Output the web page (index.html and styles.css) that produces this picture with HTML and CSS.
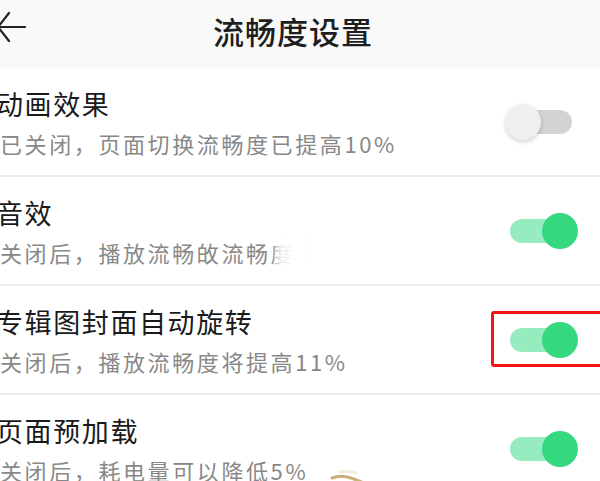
FILE: index.html
```html
<!DOCTYPE html>
<html lang="zh-CN">
<head>
    <meta charset="UTF-8">
    <meta name="viewport" content="width=device-width, initial-scale=1.0">
    <title>流畅度设置</title>
    <link rel="stylesheet" href="styles.css">
</head>
<body>
    <div class="screen">
        <header class="topbar">
            <span class="back">
                <svg width="30" height="40" viewBox="0 0 30 40">
                    <path d="M-2 21 L25 21 M9 7 L-2 21 L9 35" fill="none" stroke="#222" stroke-width="2.2" stroke-linecap="round"/>
                </svg>
            </span>
            <h1>流畅度设置</h1>
        </header>

        <ul class="settings">
            <li class="setting">
                <div class="setting-text">
                    <div class="setting-title">动画效果</div>
                    <div class="setting-desc">已关闭，页面切换流畅度已提高10%</div>
                </div>
                <span class="switch"></span>
            </li>
            <li class="setting">
                <div class="setting-text">
                    <div class="setting-title">音效</div>
                    <div class="setting-desc">关闭后，播放流畅敀流畅度<span class="smudge"></span></div>
                </div>
                <span class="switch on"></span>
            </li>
            <li class="setting">
                <div class="setting-text">
                    <div class="setting-title">专辑图封面自动旋转</div>
                    <div class="setting-desc">关闭后，播放流畅度将提高11%</div>
                </div>
                <span class="switch on"></span>
                <span class="highlight"></span>
            </li>
            <li class="setting">
                <div class="setting-text">
                    <div class="setting-title">页面预加载</div>
                    <div class="setting-desc">关闭后，耗电量可以降低5%
                        <svg class="scrap" width="44" height="20" viewBox="0 0 44 20">
                            <path d="M6 12 Q16 8 28 13 L38 17" fill="none" stroke="#c9b27a" stroke-width="3" stroke-linecap="round"/>
                            <path d="M14 6 Q22 4 30 7" fill="none" stroke="#f3ecdc" stroke-width="3" stroke-linecap="round"/>
                        </svg>
                    </div>
                </div>
                <span class="switch on"></span>
            </li>
        </ul>
    </div>
</body>
</html>
```

FILE: styles.css
```css
* {
    box-sizing: border-box;
    margin: 0;
    padding: 0;
}

body {
    background: #ffffff;
    font-family: "Noto Sans CJK SC", "Noto Sans", sans-serif;
    color: #222;
    overflow: hidden;
}

.screen {
    width: 600px;
    height: 481px;
    overflow: hidden;
}

.topbar {
    position: relative;
    height: 68px;
    background: #f9f9f9;
    display: flex;
    align-items: center;
    justify-content: center;
}

.back {
    position: absolute;
    left: 0;
    top: 6px;
}

.topbar h1 {
    font-size: 31px;
    font-weight: 500;
    color: #1e1e1e;
    letter-spacing: 1px;
    margin-left: -14px;
    margin-top: -8px;
}

.settings {
    list-style: none;
}

.setting {
    position: relative;
    height: 109px;
    display: flex;
    align-items: center;
    border-bottom: 2px solid #ececec;
    padding-right: 28px;
}

.setting-text {
    flex: 1;
    margin-left: -4px;
}

.setting-title {
    font-size: 27px;
    letter-spacing: 1.6px;
    color: #1a1a1a;
    line-height: 34px;
}

.setting-desc {
    position: relative;
    font-size: 22px;
    letter-spacing: 2.6px;
    color: #888;
    line-height: 28px;
    margin-top: 8px;
    margin-left: 4px;
}

.smudge {
    position: absolute;
    left: 276px;
    top: -14px;
    width: 140px;
    height: 52px;
    background: linear-gradient(90deg, rgba(255,255,255,0.85), #fff 30%, #fff);
    filter: blur(3px);
}

.scrap {
    position: absolute;
    left: 326px;
    top: 10px;
}

.switch {
    position: relative;
    width: 62px;
    height: 24px;
    border-radius: 12px;
    background: #d3d3d3;
}

.switch::after {
    content: "";
    position: absolute;
    left: -5px;
    top: -6px;
    width: 36px;
    height: 36px;
    border-radius: 50%;
    background: #efefef;
    box-shadow: 0 2px 4px rgba(0, 0, 0, 0.18);
}

.switch.on {
    background: #96ebbf;
}

.switch.on::after {
    left: auto;
    right: -6px;
    background: #35d77f;
    box-shadow: none;
}

.highlight {
    position: absolute;
    left: 491px;
    top: 25px;
    width: 120px;
    height: 56px;
    border: 3px solid #f41616;
    border-radius: 3px;
}
```
